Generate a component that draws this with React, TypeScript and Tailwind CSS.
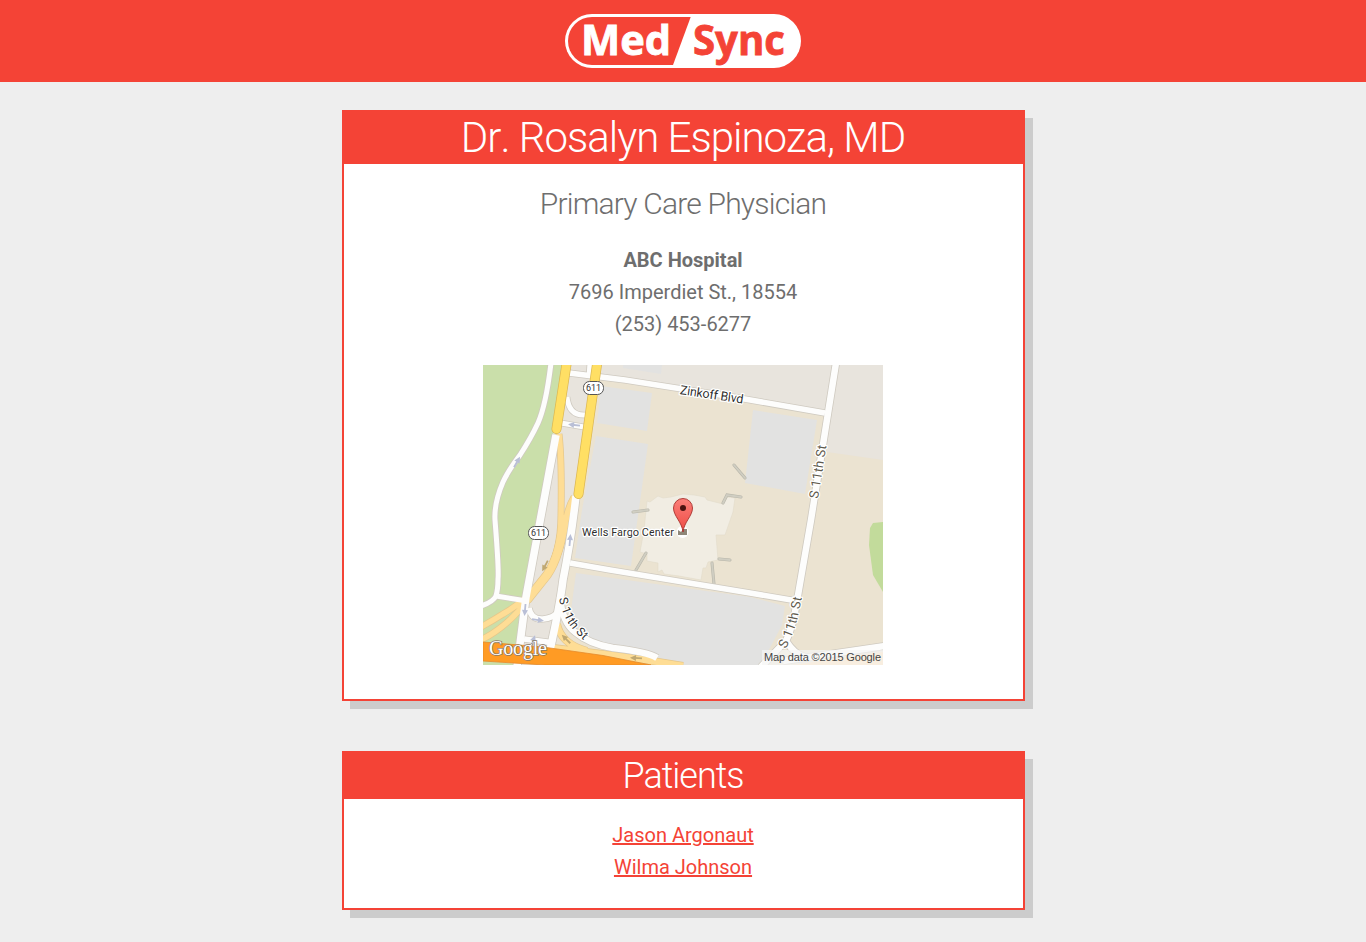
import type { ReactNode } from "react";

const patients = ["Jason Argonaut", "Wilma Johnson"];

const roads = [
  { d: "M68 -2Q63 40 55 58Q48 73 37 90Q25 106 20 117Q11 138 12 155Q16 205 15 214Q15 224 13 231M13 231L44 236M13 231Q10 237 -2 241", w: 5 },
  { d: "M73 70L43 232L34 302", w: 7.5 },
  { d: "M93 131Q88 175 80 215Q77 240 67 285", w: 7.5 },
  { d: "M86 8L142 15L250 32L342 48", w: 5.5 },
  { d: "M107 -2L106 12", w: 5 },
  { d: "M84 32Q86 51 102 50", w: 5 },
  { d: "M78 58L101 62", w: 5 },
  { d: "M87 198L127 205L267 228L314 236", w: 5.5 },
  { d: "M353 -2L328 155L314 236Q310 262 303 276Q293 286 278 302M303 276Q312 290 322 292M300 296L402 281", w: 6.5 },
  { d: "M46 243Q48 255 60 254Q70 253 74 248M41 274L72 278", w: 5.5 },
  { d: "M77 232Q79 257 92 267Q106 279 130 283Q165 287 174 293", w: 6.5 },
];

const ramps = [
  { d: "M76 69Q79 95 78 150Q78 190 61 213Q46 234 20 249Q9 256 -2 262M45 235Q24 262 -2 275", w: 5.5 },
  { d: "M91 132Q85 142 83 155Q78 192 62 213", w: 5.5 },
  { d: "M81 150Q78 190 64 210L44 235", w: 8 },
  { d: "M74 259Q78 279 104 286M70 283Q94 286 127 290Q165 295 200 301", w: 6.5 },
];

const blocks = [
  "M140 0H179L178 9L140 3Z",
  "M118 21L169 28L164 66L114 58Z",
  "M113 71L165 79L148 201L92 193L99 145Z",
  "M270 45L334 55L322 129L262 118Z",
  "M93 208L267 232L302 241L299 260L278 300H180Q165 289 130 283Q100 277 87 253Z",
];

const arrows = [
  { x: 34, y: 97, r: -60, c: "#b9bfd6" },
  { x: 91, y: 60, r: 187, c: "#b9bfd6" },
  { x: 87, y: 175, r: -85, c: "#b9bfd6" },
  { x: 42, y: 245, r: 95, c: "#b9bfd6" },
  { x: 55, y: 255, r: 8, c: "#b9bfd6" },
  { x: 50, y: 276, r: -70, c: "#b9bfd6" },
  { x: 62, y: 201, r: 118, c: "#c0a871" },
  { x: 83, y: 274, r: 225, c: "#c0a871" },
  { x: 153, y: 293, r: 183, c: "#c0a871" },
];

const Logo = () => (
  <svg width="236" height="54" viewBox="0 0 236 54" className="block overflow-visible">
    <rect width="236" height="54" rx="27" fill="#fff" />
    <path d="M27 3H125.7L108 51H27A24 24 0 0 1 27 3Z" fill="#f44336" />
    <g fontFamily="'Open Sans', sans-serif" fontWeight="700" fontSize="41" strokeWidth="0.8">
      <text x="16" y="41" textLength="90" lengthAdjust="spacingAndGlyphs" fill="#fff" stroke="#fff">
        Med
      </text>
      <text x="128" y="41" textLength="92" lengthAdjust="spacingAndGlyphs" fill="#f44336" stroke="#f44336">
        Sync
      </text>
    </g>
  </svg>
);

const Shield = ({ x, y }: { x: number; y: number }) => (
  <g>
    <rect x={x - 10} y={y - 6.5} width="20" height="13" rx="6" fill="#fff" stroke="#555" />
    <text x={x} y={y + 3.2} textAnchor="middle" fontSize="9" fill="#333">
      611
    </text>
  </g>
);

const HospitalMap = () => (
  <svg width="400" height="300" viewBox="0 0 400 300" className="block" fontFamily="Roboto, sans-serif">
    <defs>
      <path id="eleventh-east" d="M303 284Q311 267 315 252L320 226" />
      <path id="eleventh-west" d="M76 233Q79 250 88 262Q94 270 112 285" />
      <linearGradient id="pin" x1="0" y1="0" x2="0" y2="1">
        <stop offset="0" stopColor="#fb7f79" />
        <stop offset="1" stopColor="#ee4a43" />
      </linearGradient>
    </defs>

    <rect width="400" height="300" fill="#ebe3d1" />
    <path d="M80 0H400V95L344 87L342 48L118 11L112 50L93 145L78 240L66 300H30L54 160Z" fill="#e8e4dd" />
    <path d="M0 0H79L70 70L55 155L36 285H0Z" fill="#cadfaa" />
    <path d="M0 295L33 299V300H0Z" fill="#cadfaa" />
    <path d="M400 157L390 158L387 163L386 180L390 210L400 227Z" fill="#c2db9b" />
    {blocks.map((d) => (
      <path key={d} d={d} fill="#e2e2e1" />
    ))}
    <path
      d="M164 136L167 137L175 131L180 133L188 132L200 129L211 130L222 132L224 135L240 139L244 132L252 133L250 147L242 170L233 170L235 195L225 197L223 203H220L218 215L196 211L181 209L179 205L175 207V198L164 196V189L157 187L161 165Z"
      fill="#f1ede3"
      stroke="#e3dccb"
      strokeWidth="0.6"
    />
    <g fill="none" strokeLinecap="round">
      {["#b9b7ab", "#d0cec2"].map((c, i) => (
        <path
          key={c}
          d="M251 100L262 113M240 138L244 130L258 132M150 147L165 145M153 205L163 188M236 194L247 195M229 198L231 219"
          stroke={c}
          strokeWidth={i ? 1.8 : 3}
        />
      ))}
    </g>

    <g fill="none">
      {ramps.map(({ d, w }) => (
        <path key={d} d={d} stroke="#e5c78b" strokeWidth={w + 1.4} />
      ))}
      {roads.map(({ d, w }) => (
        <path key={d} d={d} stroke="#cfcac0" strokeWidth={w + 1.6} />
      ))}
      {ramps.map(({ d, w }) => (
        <path key={d} d={d} stroke="#fedd95" strokeWidth={w} />
      ))}
      {roads.map(({ d, w }) => (
        <path key={d} d={d} stroke="#fdfdfc" strokeWidth={w} />
      ))}
      <g strokeLinecap="round">
        <path d="M84 -4L73.500 64M114.500 -4L95.500 129" stroke="#dcb751" strokeWidth="10" />
        <path d="M84 -4L73.500 64M114.500 -4L95.500 129" stroke="#ffdf64" strokeWidth="8.600" />
      </g>
    </g>
    <path d="M310 300L400 287V300Z" fill="#fedcb0" />
    <path d="M0 277L60 282L120 290.500L168 300H62L30 298L0 296Z" fill="#ff9b24" stroke="#e48a2b" strokeWidth="0.8" />

    {arrows.map(({ x, y, r, c }) => (
      <g key={`${x}-${y}`} transform={`translate(${x} ${y}) rotate(${r})`}>
        <path d="M-6 0H2" stroke={c} strokeWidth="1.8" />
        <path d="M6 0L0 -3V3Z" fill={c} />
      </g>
    ))}

    <Shield x={110.5} y={23} />
    <Shield x={55.5} y={168} />

    <g fontSize="12" fill="#2f2f2f" stroke="#fff" strokeWidth="2.500" strokeLinejoin="round" paintOrder="stroke">
      <text transform="translate(196.500 29) rotate(8.500)" fontSize="12.500" textLength="64">
        Zinkoff Blvd
      </text>
      <text transform="translate(335 134) rotate(-81)" fontSize="13" textLength="54" fill="#5e594c">
        S 11th St
      </text>
      <text fontSize="13" fill="#5e594c">
        <textPath href="#eleventh-east" textLength="54">
          S 11th St
        </textPath>
      </text>
      <text>
        <textPath href="#eleventh-west" textLength="50">
          S 11th St
        </textPath>
      </text>
      <text x="99" y="171" fontSize="11" textLength="92">
        Wells Fargo Center
      </text>
    </g>

    <circle cx="199.500" cy="167" r="6" fill="#fff" />
    <path d="M195 165L198 167L200 164L204 164V170H195Z" fill="#8f8778" />
    <path
      d="M200 167C199 157 190.500 151 190.500 143A9.500 9.500 0 0 1 209.500 143C209.500 151 201 157 200 167Z"
      fill="url(#pin)"
      stroke="#a8312c"
      strokeWidth="0.9"
    />
    <circle cx="200" cy="143" r="3" fill="#4c1210" />

    <text
      x="6"
      y="290"
      fontFamily="'Liberation Serif', serif"
      fontSize="20"
      textLength="58"
      fill="#fff"
      stroke="#8a7a68"
      strokeWidth="1.500"
      paintOrder="stroke"
    >
      Google
    </text>
    <rect x="279" y="285" width="121" height="15" fill="#f5f5f5" fillOpacity="0.7" />
    <text x="281" y="296" fontFamily="'Liberation Sans', sans-serif" fontSize="11" textLength="117" fill="#444">
      Map data ©2015 Google
    </text>
  </svg>
);

const Card = ({ children, className }: { children: ReactNode; className: string }) => (
  <section
    className={`mx-auto w-1/2 border-2 border-[#f44336] bg-white text-center shadow-[8px_8px_0_#ccc] ${className}`}
  >
    {children}
  </section>
);

export default function App() {
  return (
    <div className="min-h-screen bg-[#eee] font-[Roboto,sans-serif] text-xl leading-8 text-[#6e6e6e]">
      <header className="flex h-[82px] items-start justify-center bg-[#f44336] pt-3.5">
        <Logo />
      </header>

      <main className="pt-7">
        <Card className="h-[591px]">
          <h1 className="h-[52px] bg-[#f44336] text-[42px] leading-[52px] font-light tracking-[-1px] text-white [font-kerning:none]">
            Dr. Rosalyn Espinoza, MD
          </h1>
          <h2 className="mt-5 text-[30px] leading-10 font-light tracking-[-0.8px]">
            Primary Care Physician
          </h2>
          <div className="mt-5">
            <p className="font-bold">ABC Hospital</p>
            <p>7696 Imperdiet St., 18554</p>
            <p>(253) 453-6277</p>
          </div>
          <div className="mt-[25px] flex justify-center">
            <HospitalMap />
          </div>
        </Card>

        <Card className="mt-[50px] h-[159px]">
          <h2 className="h-[46px] bg-[#f44336] text-[36px] leading-[46px] font-light tracking-[-1px] text-white">
            Patients
          </h2>
          <ul className="mt-5">
            {patients.map((name) => (
              <li key={name}>
                <a href="#" className="text-[#f44336] underline">
                  {name}
                </a>
              </li>
            ))}
          </ul>
        </Card>
      </main>
    </div>
  );
}
